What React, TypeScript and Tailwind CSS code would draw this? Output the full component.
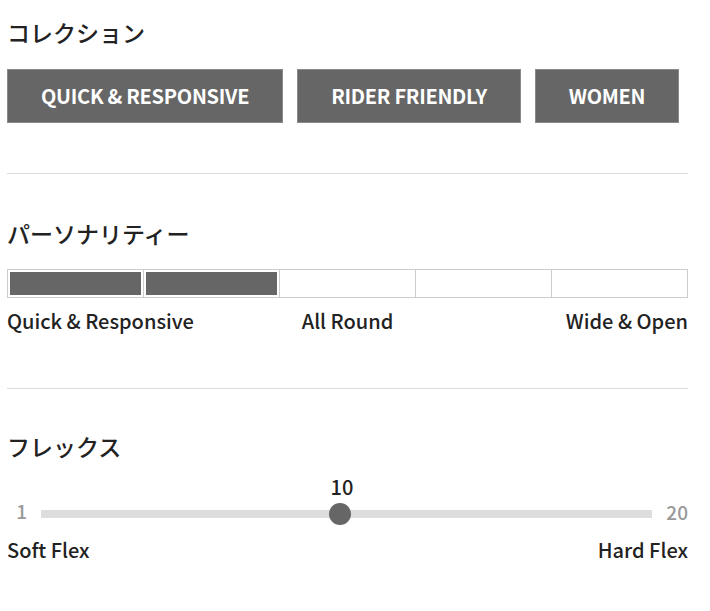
import React from "react";

const FONT = { fontFamily: '"Noto Sans CJK JP", "Noto Sans", sans-serif' };

const collections = ["QUICK & RESPONSIVE", "RIDER FRIENDLY", "WOMEN"];
const personality = 2; // filled cells out of 5
const flex = 10;
const flexMin = 1;
const flexMax = 20;

export default function App() {
  // thumb sits a touch left of the pure ratio, as in the source slider
  const pct = 48.9;

  return (
    <div className="min-h-screen w-[710px] bg-white text-[#222]" style={FONT}>
      <div className="w-[681px] pl-[7px] box-content">
        {/* Collection */}
        <section className="pt-[17px] pb-[50px]">
          <h2 className="text-[23px] leading-[30px] font-medium">コレクション</h2>
          <div className="mt-[22px] flex gap-[14px]">
            {collections.map((c) => (
              <div
                key={c}
                className="h-[54px] px-[33px] flex items-center justify-center bg-[#666] border border-[#8a8a8a] text-white text-[20px] font-bold tracking-[-0.3px]"
              >
                {c}
              </div>
            ))}
          </div>
        </section>

        <hr className="border-0 border-t border-[#dcdcdc]" />

        {/* Personality */}
        <section className="pt-[44px] pb-[54px]">
          <h2 className="text-[23px] leading-[30px] font-medium">パーソナリティー</h2>
          <div className="mt-[21px] flex border border-[#ccc] h-[29px]">
            {[0, 1, 2, 3, 4].map((i) => (
              <div key={i} className={`flex-1 p-[2px] ${i < 4 ? "border-r border-[#ccc]" : ""}`}>
                {i < personality && <div className="h-full bg-[#666]" />}
              </div>
            ))}
          </div>
          <div className="mt-[10px] grid grid-cols-3 text-[20px] leading-[26px] font-medium text-[#222]">
            <span>Quick &amp; Responsive</span>
            <span className="text-center">All Round</span>
            <span className="text-right">Wide &amp; Open</span>
          </div>
        </section>

        <hr className="border-0 border-t border-[#dcdcdc]" />

        {/* Flex */}
        <section className="pt-[42px]">
          <h2 className="text-[23px] leading-[30px] font-medium">フレックス</h2>
          <div className="mt-[35px] flex items-center gap-[14px]">
            <span className="w-[20px] text-right text-[19px] font-medium text-[#999]">{flexMin}</span>
            <div className="relative flex-1 h-[8px] bg-[#ddd] mt-[6px]">
              <div
                className="absolute top-1/2 w-[22px] h-[22px] -translate-x-1/2 -translate-y-1/2 rounded-full bg-[#666]"
                style={{ left: `${pct}%` }}
              />
              <span
                className="absolute bottom-[19px] ml-[2px] -translate-x-1/2 text-[20px] leading-[24px] font-medium text-[#222]"
                style={{ left: `${pct}%` }}
              >
                {flex}
              </span>
            </div>
            <span className="text-[19px] font-medium text-[#999] mt-[2px]">{flexMax}</span>
          </div>
          <div className="mt-[10px] flex justify-between text-[20px] leading-[26px] font-medium">
            <span>Soft Flex</span>
            <span>Hard Flex</span>
          </div>
        </section>
      </div>
    </div>
  );
}
